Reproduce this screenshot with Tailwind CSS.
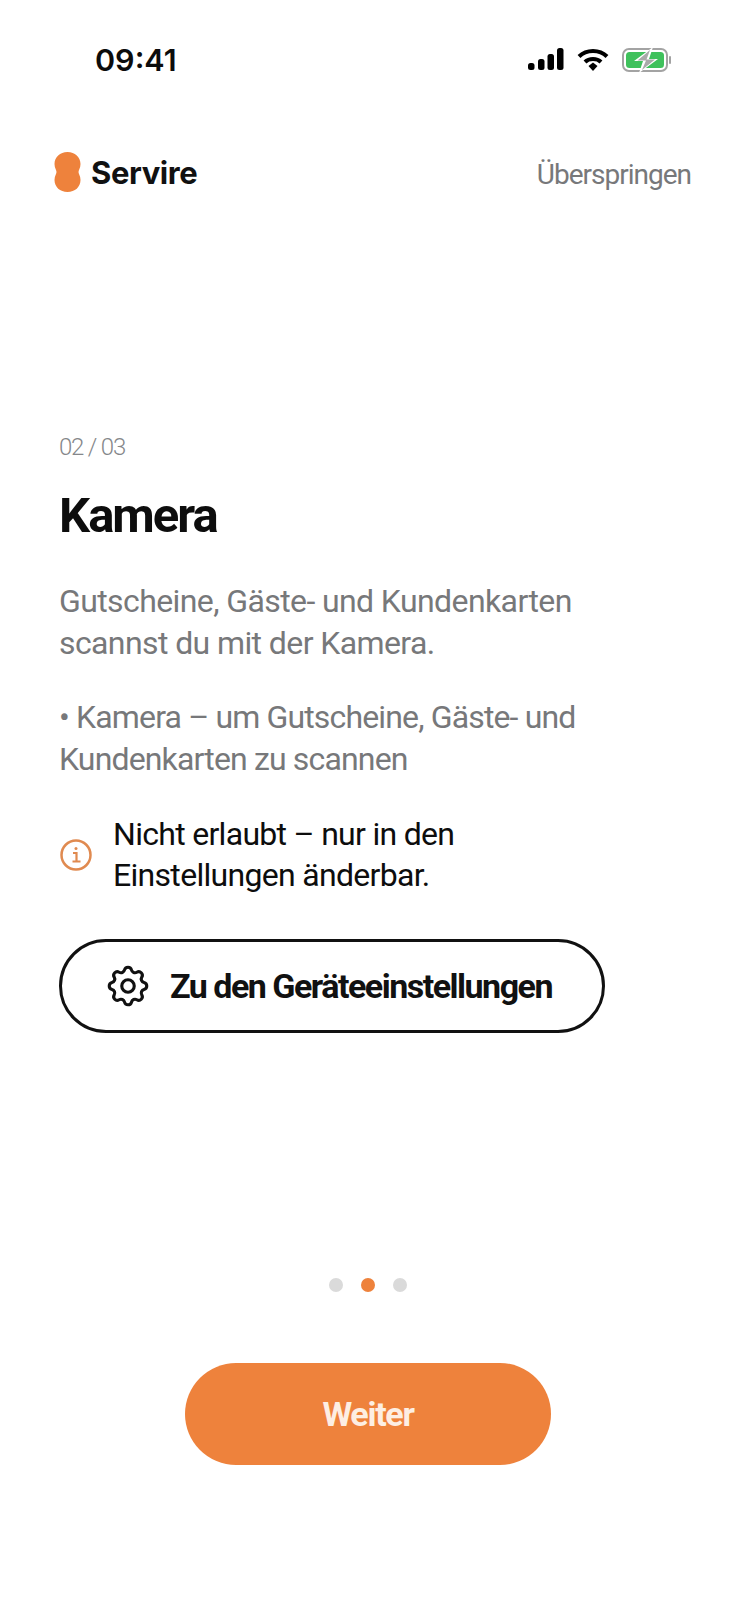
<!doctype html>
<html lang="de"><head><meta charset="utf-8"><script src="https://cdn.jsdelivr.net/npm/@tailwindcss/browser@4"></script></head>
<body class="bg-white">
<main class="w-[736px] h-[1601px] flex flex-col bg-white font-['Roboto',sans-serif] overflow-hidden">
  <div class="h-[141px] pt-[42px] pl-[95px] pr-[64px] flex items-start justify-between">
    <span class="font-['Inter',sans-serif] text-[30.5px] leading-[36px] font-semibold text-[#0c0c0c]">09:41</span>
    <div class="flex items-center gap-[13px] mt-[5px]">
      <svg width="36" height="24" viewBox="0 0 36 24"><rect x="0" y="15" width="6.500" height="7" rx="2.500"/><rect x="10" y="11" width="6.500" height="11" rx="2.500"/><rect x="19.500" y="6" width="6.500" height="16" rx="2.500"/><rect x="29" y="0" width="6.500" height="22" rx="2.500"/></svg>
      <svg width="32" height="24" viewBox="0 0 32 24" fill="none" stroke="#000" stroke-width="4"><path d="M2 8.500C9.500 1 22.500 1 30 8.500"/><path d="M8 14C12 10 20 10 24 14"/><path d="M11.500 18L16 14.500 20.500 18 16 23Z" fill="#000" stroke="none"/></svg>
      <svg width="50" height="26" viewBox="0 0 50 26"><rect x="1" y="2" width="44" height="22" rx="6" fill="#fff" stroke="#a3a3a3" stroke-width="2"/><rect x="4" y="5" width="38" height="16" rx="3.500" fill="#3fc15c"/><path d="M31 0L12 14H21L17 26 36 12H27Z" fill="#fff"/><path d="M28 3L15.500 13.500H24L20 23 33 12.500H24.500Z" fill="#a9a9a9"/><rect x="47" y="9" width="2" height="8" rx="1" fill="#a3a3a3"/></svg>
    </div>
  </div>
  <header class="h-[64px] pl-[54px] pr-[45px] flex items-center justify-between">
    <div class="flex items-center gap-[10px]">
      <svg width="27" height="40" viewBox="0 0 27 40" class="mt-[-2px]"><path d="M13.500 0C21 0 26.500 5 26.500 12C26.500 16 24.500 18 24.500 20C24.500 22 26.500 24 26.500 28C26.500 35 21 40 13.500 40C6 40 .5 35 .5 28C.5 24 2.500 22 2.500 20C2.500 18 .5 16 .5 12C.5 5 6 0 13.500 0Z" fill="#ee823c"/></svg>
      <span class="font-['Inter',sans-serif] text-[31px] leading-[40px] font-bold text-[#111] tracking-[-0.4px]">Servire</span>
    </div>
    <span class="mt-[3px] text-[28px] leading-[36px] text-[#77787a] tracking-[-1px]">Überspringen</span>
  </header>
  <section class="pl-[59px] pt-[226px] flex flex-col items-start">
    <p class="text-[24px] leading-[32px] font-light text-[#85878a] tracking-[-1.200px]">02 / 03</p>
    <h1 class="mt-[25px] text-[49px] leading-[56px] font-bold text-[#0d0d0d] tracking-[-2px]">Kamera</h1>
    <p class="mt-[36px] text-[32px] leading-[42px] text-[#77787a] tracking-[-0.6px]">Gutscheine, Gäste- und Kundenkarten<br>scannst du mit der Kamera.</p>
    <p class="mt-[32px] text-[32px] leading-[42px] text-[#77787a] tracking-[-0.85px]">• Kamera – um Gutscheine, Gäste- und<br>Kundenkarten zu scannen</p>
    <div class="mt-[34px] flex items-center gap-[21px] ml-[1px]">
      <svg width="32" height="32" viewBox="0 0 32 32" fill="none" stroke="#e08a50" stroke-width="2.500"><circle cx="16" cy="16" r="14.500"/><circle cx="16" cy="9.500" r="1.500" fill="#e08a50" stroke="none"/><path d="M13 14H16.500V22.500M12.500 22.500H20.500" stroke-width="2.200"/></svg>
      <p class="text-[32px] leading-[41px] font-[450] text-[#0d0d0d] tracking-[-0.7px]">Nicht erlaubt – nur in den<br>Einstellungen änderbar.</p>
    </div>
    <button class="mt-[43px] w-[546px] h-[94px] rounded-[47px] border-[3px] border-[#111] flex items-center gap-[17px] pl-[41px]">
      <svg width="50" height="50" viewBox="0 0 24 24" fill="none" stroke="#111" stroke-width="1.500" stroke-linecap="round" stroke-linejoin="round"><path d="M10.325 4.317c.426-1.756 2.924-1.756 3.35 0a1.724 1.724 0 0 0 2.573 1.066c1.543-.94 3.31.826 2.37 2.37a1.724 1.724 0 0 0 1.065 2.572c1.756.426 1.756 2.924 0 3.35a1.724 1.724 0 0 0-1.066 2.573c.94 1.543-.826 3.31-2.37 2.37a1.724 1.724 0 0 0-2.572 1.065c-.426 1.756-2.924 1.756-3.35 0a1.724 1.724 0 0 0-2.573-1.066c-1.543.94-3.31-.826-2.37-2.37a1.724 1.724 0 0 0-1.065-2.572c-1.756-.426-1.756-2.924 0-3.35a1.724 1.724 0 0 0 1.066-2.573c-.94-1.543.826-3.31 2.37-2.37c1 .608 2.296.07 2.572-1.065z"/><circle cx="12" cy="12" r="3"/></svg>
      <span class="text-[34px] leading-[40px] font-bold text-[#111] tracking-[-1.500px]">Zu den Geräteeinstellungen</span>
    </button>
  </section>
  <div class="mt-[245px] flex justify-center gap-[18px]">
    <span class="w-[14px] h-[14px] rounded-full bg-[#dadada]"></span>
    <span class="w-[14px] h-[14px] rounded-full bg-[#ee823c]"></span>
    <span class="w-[14px] h-[14px] rounded-full bg-[#dadada]"></span>
  </div>
  <div class="mt-[71px] flex justify-center">
    <button class="w-[366px] h-[102px] rounded-[51px] bg-[#ee823c] text-[34px] font-bold text-[#fdeee3] tracking-[-1.300px]">Weiter</button>
  </div>
</main>
</body></html>
